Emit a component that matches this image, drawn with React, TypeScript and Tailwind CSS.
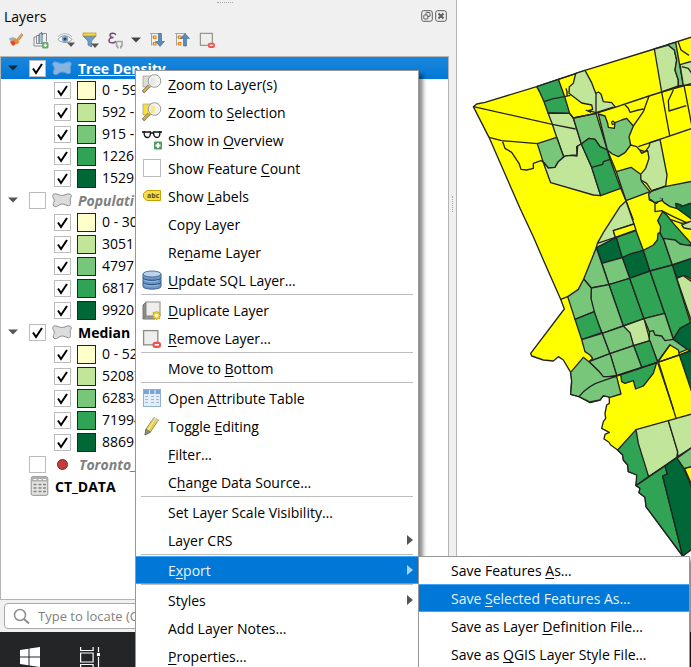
import type { ReactNode } from "react";

const CREAM = "#ffffcc";
const LIME = "#c2e699";
const MID = "#78c679";
const GREEN = "#31a354";
const DARK = "#006837";
const RAMP = [CREAM, LIME, MID, GREEN, DARK];

/* ---------- toolbar icons ---------- */

function BrushIcon() {
  return (
    <svg width="16" height="16" viewBox="0 0 16 16">
      <path d="M1 6.500l5-1.500 3.500 3-3 6-3-1z" fill="#f6c95a" />
      <path d="M1 6.500l4-1.500 2 2-4 2.500z" fill="#8fb4dc" />
      <path d="M2 10l5-2.500 2 3-4 3.500z" fill="#e0463a" />
      <path d="M7.500 6l4 4-2.500 2.500L5 8.500z" fill="#f08a24" />
      <path d="M9 7l4.500-5.500L15 3l-4 5.500z" fill="#d9a55c" stroke="#9a6a28" strokeWidth=".5" />
    </svg>
  );
}

function AddGroupIcon() {
  return (
    <svg width="16" height="18" viewBox="0 0 16 18" fill="none">
      <path d="M4 6H1v9h8" stroke="#8d8d8d" />
      <path d="M6.500 4.500H3.500v8h5" stroke="#8d8d8d" />
      <path d="M9 2.500h4.500v8M7 3.500v8" stroke="#8d8d8d" />
      <path d="M9 13V4a1.500 1.500 0 0 0-3 0v8M8 1l2 3" stroke="#3b6a96" />
      <rect x="9" y="11" width="6.500" height="6.500" rx="1.500" fill="#6ba573" />
      <path d="M12.250 12.500v3.500M10.500 14.250h3.500" stroke="#fff" strokeWidth="1.200" />
    </svg>
  );
}

function EyeIcon() {
  return (
    <svg width="18" height="16" viewBox="0 0 18 16">
      <path d="M1 7.500C4 2.500 11 2.500 15 7.500 11 11.500 5 11.500 1 7.500z" fill="#fff" stroke="#9b9b9b" />
      <path d="M1 5C5 0 12 1 15 5" fill="none" stroke="#b9b9b9" />
      <circle cx="8" cy="7" r="3.300" fill="#7fa3c9" />
      <circle cx="8" cy="7" r="1.500" fill="#2c4566" />
      <path d="M10 10.500h8l-4 4.500z" fill="#555" />
    </svg>
  );
}

function FilterIcon() {
  return (
    <svg width="17" height="17" viewBox="0 0 17 17">
      <path d="M1 4h13L9.500 9v6L6 13V9z" fill="#6f9dcb" stroke="#47759f" strokeWidth=".7" />
      <rect x="1" y="1" width="13" height="3" fill="#f5d63b" stroke="#b79512" strokeWidth=".7" />
      <path d="M9 11.500h8l-4 4.500z" fill="#555" />
    </svg>
  );
}

function EpsilonIcon() {
  return (
    <svg width="16" height="17" viewBox="0 0 16 17" fill="none">
      <path d="M8 3C6.500 .5 2 .8 2 3.300c0 1.700 2 2.200 3.500 2.200C3.500 5.500 1 6 1 8.500c0 3 5 3.200 7 .7" stroke="#72466f" strokeWidth="1.400" />
      <path d="M8.500 9.500h5.500v3c0 1.500-.8 2-1.200 2v2M8.500 9.500v3c0 1.500.8 2 1.200 2v2" stroke="#a5a5a5" strokeWidth="1.700" />
    </svg>
  );
}

function ExpandIcon({ up }: { up?: boolean }) {
  return (
    <svg width="16" height="16" viewBox="0 0 16 16">
      <path d="M1 1.500h11M2.500 1.500v12M2.500 5h3M2.500 12h3" stroke="#a5a5a5" fill="none" />
      <rect x="4.500" y="4" width="2.500" height="2.500" fill="#fbd38a" stroke="#e28a1b" />
      <rect x="4.500" y="10.500" width="2.500" height="2.500" fill="#fbd38a" stroke="#e28a1b" />
      <path
        d={up ? "M11 1.500l4.500 5h-3v7.500h-3V6.500h-3z" : "M9.500 1.500h3v8h3L11 14.500 6.500 9.500h3z"}
        fill="#5b8bbb"
        stroke="#36648f"
        strokeWidth=".6"
      />
    </svg>
  );
}

function RemoveBoxIcon({ size }: { size: number }) {
  return (
    <svg width={size} height={size} viewBox="0 0 18 18">
      <rect x="1.500" y="1.500" width="13.500" height="13.500" fill="#eeeeec" stroke="#888a85" strokeWidth="1.200" />
      <rect x="10" y="12" width="8" height="6" rx="2.500" fill="#ef5350" />
      <path d="M12 15h4" stroke="#fff" strokeWidth="1.500" />
    </svg>
  );
}

/* ---------- tree icons ---------- */

function PolygonIcon({ tone }: { tone: "blue" | "grey" }) {
  const fill = tone === "blue" ? "#86b4e2" : "#dcdcdc";
  const stroke = tone === "blue" ? "#5f9ad4" : "#8c8c8c";
  return (
    <svg width="20" height="15" viewBox="0 0 20 15" className="shrink-0">
      <path
        d="M.7 2.500C1 .8 3.500 .5 5 1.200 8 2.600 11 3 14 1.500 16 .5 19 .6 19.300 2.500 19.500 4.500 18 5 18.200 7c.2 2 .6 3 .2 4.500-.5 1.800-3 1.300-5 .3-3-1.300-5-1-7.500 1C4.500 14.200 1.500 14 1.200 12 1 10 2.500 9 2.300 7 2 5 .4 4.500 .7 2.500z"
        fill={fill}
        stroke={stroke}
      />
    </svg>
  );
}

function Tick() {
  return (
    <svg viewBox="0 0 17 17" className="pointer-events-none absolute inset-0 hidden size-full peer-checked:block">
      <path d="M4 8.500l3 4.500L13 4" fill="none" stroke="#000" strokeWidth="2" />
    </svg>
  );
}

function Check({ label, checked }: { label: string; checked?: boolean }) {
  return (
    <span className="relative size-[17px] shrink-0">
      <input
        type="checkbox"
        aria-label={label}
        defaultChecked={checked}
        className="peer block size-full appearance-none border border-[#bcbcbc] bg-white"
      />
      <Tick />
    </span>
  );
}

function Arrow({ className }: { className: string }) {
  return (
    <svg width="10" height="6" viewBox="0 0 10 6" className={className}>
      <path d="M0 .5h10L5 5.500z" fill="currentColor" />
    </svg>
  );
}

function Classes({ name, labels }: { name: string; labels: string[] }) {
  return (
    <ul>
      {labels.map((text, i) => (
        <li key={text} className="flex h-[22px] items-center pl-[53px]">
          <Check label={`${name} ${text}`} checked />
          <span className="ml-1.5 size-[19px] border border-[#232323]" style={{ background: RAMP[i] }} />
          <span className="ml-1.5">{text}</span>
        </li>
      ))}
    </ul>
  );
}

function LayerRow({ name, checked, selected }: { name: string; checked?: boolean; selected?: boolean }) {
  const look = selected
    ? "bg-gradient-to-b from-[#1a86dc] to-[#0078d7] font-bold text-white underline"
    : checked
      ? "font-bold"
      : "font-bold italic text-[#808080]";
  return (
    <div className={`flex h-[22px] items-center pl-[7px] ${look}`}>
      <Arrow className={selected ? "mr-[11px] text-[#0b2a44]" : "mr-[11px] text-[#555]"} />
      <Check label={name} checked={checked} />
      <span className="mr-1.5 ml-1.5">
        <PolygonIcon tone={selected ? "blue" : "grey"} />
      </span>
      <span className="pt-0.5">{name}</span>
    </div>
  );
}

/* ---------- menu icons ---------- */

function MagnifierIcon({ page }: { page: string }) {
  return (
    <svg width="20" height="20" viewBox="0 0 20 20">
      <path d="M1 2h8v11H1z" fill={page} stroke="#a5a58c" strokeWidth=".8" />
      <path d="M7 12l-6 6" stroke="#666" strokeWidth="3.200" />
      <path d="M7 12l-5.500 5.500" stroke="#e2b13c" strokeWidth="2.200" />
      <circle cx="12.500" cy="7" r="6.300" fill="#f1f1ee" fillOpacity=".9" stroke="#999" />
      <path d="M9 4h4v7H9z" fill={page} fillOpacity=".5" />
    </svg>
  );
}

function GlassesIcon() {
  return (
    <svg width="20" height="20" viewBox="0 0 20 20">
      <path d="M0 2h3M17 2h3M8 3h4" stroke="#111" strokeWidth="1.300" />
      <path d="M2 2h6.500c0 4-1 5.500-3 5.500S2 6 2 2zM11.500 2H18c0 4-1 5.500-3 5.500s-3.500-1.500-3.500-5.500z" fill="#fff" stroke="#111" strokeWidth="1.300" />
      <rect x="12" y="11.500" width="8" height="8" rx="1" fill="#4f9a5c" />
      <path d="M16 13v5M13.500 15.500h5" stroke="#fff" strokeWidth="1.800" />
    </svg>
  );
}

function LabelTagIcon() {
  return (
    <svg width="18" height="12" viewBox="0 0 18 12">
      <path d="M4 .5h13.500v10H4L.5 7.500v-4z" fill="#f7dd4b" stroke="#c4a000" />
      <text x="4" y="8" fontSize="7" fontWeight="700" fill="#5c4d08" fontFamily="Open Sans, sans-serif">
        abc
      </text>
    </svg>
  );
}

function DatabaseIcon() {
  return (
    <svg width="20" height="20" viewBox="0 0 20 20">
      <path d="M1 4v12.500C1 20 19 20 19 16.500V4z" fill="#6a96c8" stroke="#41628a" />
      <path d="M1 8c1 3 17 3 18 0M1 12.300c1 3 17 3 18 0" fill="none" stroke="#2f4f73" />
      <path d="M2 9.700c2 2.500 12 2.500 14 .8M2 14c2 2.500 12 2.500 14 .8" fill="none" stroke="#a6c5e6" strokeWidth=".8" />
      <ellipse cx="10" cy="4" rx="9" ry="3" fill="#bcd3ea" stroke="#4f7299" />
    </svg>
  );
}

function DuplicateIcon() {
  return (
    <svg width="19" height="19" viewBox="0 0 19 19">
      <path d="M1 4l3-3v14l-3 3z" fill="#8c8c88" stroke="#777" />
      <path d="M1 18h12l2-3H4z" fill="#9c9c98" stroke="#777" />
      <rect x="4" y="1" width="14" height="14" fill="#eeeeec" stroke="#888a85" />
      <path d="M14.500 10l1.300 1.500 2-.3-.3 2 1.300 1.300-1.300 1.300.3 2-2-.3L14.500 19l-1.300-1.500-2 .3.3-2-1.300-1.300 1.300-1.300-.3-2 2 .3z" fill="#e8cc3a" stroke="#b89c20" strokeWidth=".7" />
      <circle cx="14.500" cy="14.500" r="1.800" fill="#fff8c8" />
    </svg>
  );
}

function TableIcon() {
  return (
    <svg width="18" height="18" viewBox="0 0 18 18">
      <rect x=".5" y=".5" width="17" height="17" fill="#e3edf7" stroke="#8fb1d3" />
      <rect x="1" y="1" width="16" height="4" fill="#7aa5d2" />
      <path d="M6.500 1v16M12 1v16" stroke="#e9f1f9" />
      <path d="M2 7.500h3M8 7.500h3M13 7.500h3M2 10.500h3M8 10.500h3M13 10.500h3M2 13.500h3M8 13.500h3M13 13.500h3" stroke="#9db9d6" />
    </svg>
  );
}

function GreyTableIcon() {
  return (
    <svg width="19" height="20" viewBox="0 0 18 20">
      <rect x=".7" y=".7" width="16.600" height="18.600" rx="1.500" fill="#e3e3e1" stroke="#8f8f8f" />
      <rect x="1" y="1" width="16" height="4.500" fill="#b0b0b0" />
      <path d="M3 3.500h3M8 3.500h3M12.500 3.500h3" stroke="#fff" />
      <path d="M3 8.500h3M8 8.500h3M12.500 8.500h3M3 12h3M8 12h3M12.500 12h3M3 15.500h3M8 15.500h3M12.500 15.500h3" stroke="#858585" strokeWidth="1.400" />
    </svg>
  );
}

function PencilIcon() {
  return (
    <svg width="16" height="20" viewBox="0 0 16 20">
      <path d="M1 19l1-6L10 1.500l4.500 2.500L6.500 16z" fill="#e3cf4a" stroke="#8a8038" strokeWidth=".8" />
      <path d="M10 1.500l4.500 2.500-1.500 2.500L8.500 4z" fill="#c9c9c5" />
      <path d="M1 19l1-6 4.500 3z" fill="#8f8f8b" stroke="#555" strokeWidth=".6" />
      <path d="M4 14l7.500-11.500" stroke="#f7efa6" strokeWidth="1.200" />
    </svg>
  );
}

/* ---------- menus ---------- */

/** Renders a caption whose mnemonic letter follows an ampersand. */
function Caption({ text }: { text: string }) {
  const at = text.indexOf("&");
  if (at < 0) return <span className="pt-0.5">{text}</span>;
  return (
    <span className="pt-0.5">
      {text.slice(0, at)}
      <span className="underline underline-offset-2">{text[at + 1]}</span>
      {text.slice(at + 2)}
    </span>
  );
}

function MenuItem({ text, icon, active, sub }: { text: string; icon?: ReactNode; active?: boolean; sub?: boolean }) {
  return (
    <button
      type="button"
      role="menuitem"
      className={`flex h-7 w-full items-center text-left whitespace-nowrap ${
        active ? "border-y border-[#42a5f5] bg-[#0078d7] text-[#e8f3fc]" : ""
      }`}
    >
      <span className="flex w-[33px] shrink-0 justify-center">{icon}</span>
      <Caption text={text} />
      {sub && (
        <svg width="6" height="10" viewBox="0 0 6 10" className={`mr-1.5 ml-auto ${active ? "text-[#a9d3f5]" : "text-[#555]"}`}>
          <path d="M0 0l6 5-6 5z" fill="currentColor" />
        </svg>
      )}
    </button>
  );
}

function Separator() {
  return <div role="separator" className="mr-1.5 ml-1.5 h-0.5 border-t border-[#bdbdbd]" />;
}

function MenuFrame({ className, label, children }: { className: string; label: string; children: ReactNode }) {
  return (
    <div
      role="menu"
      aria-label={label}
      className={`absolute bg-white shadow-[4px_4px_4px_rgba(0,0,0,0.45)] outline outline-1 -outline-offset-1 outline-[#979797] ${className}`}
    >
      {children}
    </div>
  );
}

function ContextMenu() {
  return (
    <MenuFrame label="Layer" className="top-[70px] left-[135px] w-[284px]">
      <MenuItem text="&Zoom to Layer(s)" icon={<MagnifierIcon page="#dcdcd8" />} />
      <MenuItem text="Zoom to &Selection" icon={<MagnifierIcon page="#f7df3e" />} />
      <MenuItem text="Show in &Overview" icon={<GlassesIcon />} />
      <label className="flex h-7 items-center">
        <span className="flex w-[33px] shrink-0 justify-center">
          <input type="checkbox" className="size-[18px] appearance-none border border-[#bcbcbc] bg-white" />
        </span>
        <Caption text="Show Feature &Count" />
      </label>
      <MenuItem text="Show &Labels" icon={<LabelTagIcon />} />
      <MenuItem text="Copy Layer" />
      <MenuItem text="Re&name Layer" />
      <MenuItem text="&Update SQL Layer…" icon={<DatabaseIcon />} />
      <Separator />
      <MenuItem text="&Duplicate Layer" icon={<DuplicateIcon />} />
      <MenuItem text="&Remove Layer…" icon={<RemoveBoxIcon size={19} />} />
      <Separator />
      <MenuItem text="Move to &Bottom" />
      <Separator />
      <MenuItem text="Open &Attribute Table" icon={<TableIcon />} />
      <MenuItem text="Toggle &Editing" icon={<PencilIcon />} />
      <MenuItem text="&Filter…" />
      <MenuItem text="C&hange Data Source…" />
      <Separator />
      <MenuItem text="Set Layer Scale Visibility…" />
      <MenuItem text="Layer CRS" sub />
      <Separator />
      <MenuItem text="E&xport" active sub />
      <Separator />
      <MenuItem text="Styles" sub />
      <MenuItem text="Add Layer Notes…" />
      <MenuItem text="&Properties…" />
    </MenuFrame>
  );
}

function ExportMenu() {
  return (
    <MenuFrame label="Export" className="top-[556px] left-[418px] w-[272px]">
      <MenuItem text="Save Features &As…" />
      <MenuItem text="Save &Selected Features As…" active />
      <MenuItem text="Save as Layer &Definition File…" />
      <MenuItem text="Save as &QGIS Layer Style File…" />
    </MenuFrame>
  );
}

/* ---------- map ---------- */

/* Map units are a third of a pixel. Tracts are grouped by map sheet, each with its own origin. */
function TractMap() {
  return (
    <svg
      viewBox="1371 0 702 1896"
      width="234"
      height="632"
      className="block"
      role="img"
      aria-label="Tree density by census tract"
      fill="none"
      stroke="#232323"
      strokeWidth="4"
      strokeLinejoin="round"
    >
      <path
        fill="#ffff00"
        d="M1420 320L1430 312 1455 307 1610 260 1755 211 1963 147 2085 108 2085 1640 2048 1668 1938 1520 1935 1492 1917 1478 1920 1465 1908 1455 1912 1425 1885 1415 1883 1395 1870 1380 1868 1365 1853 1350 1832 1335 1826 1326 1812 1317 1815 1303 1828 1297 1805 1285 1810 1265 1817 1255 1815 1240 1820 1215 1828 1210 1828 1192 1820 1187 1808 1190 1800 1200 1770 1208 1737 1190 1712 1183 1715 1140 1712 1117 1690 1080 1675 1070 1660 1083 1630 1080 1595 1068 1592 1060 1693 927 1682 898 1630 780 1600 710 1560 625 1467 412z"
      />
      <g transform="translate(1395 90)">
        <path fill={GREEN} d="M215 170L280 148 299 200 314 250 249 249 237 215 225 188z" />
        <path fill={LIME} d="M249 249L314 250 325 264 349 342 335 350 336 375 318 376 296 380 275 322 262 283z" />
        <path fill={MID} d="M217 341L275 322 296 380 280 395 270 412 250 414 234 395z" />
        <path fill={LIME} d="M234 395L250 414 270 412 280 395 300 378 318 376 336 378 338 348 349 342 380 412 407 497 385 495 257 458z" />
        <path fill={MID} d="M325 264L393 250 427 360 405 350 390 328 372 325 349 342z" />
        <path fill={GREEN} d="M349 342L372 325 390 328 405 350 427 360 435 388 467 475 407 497 380 412z" />
        <path fill={LIME} d="M332 130L360 121 380 158 392 190 400 186 408 192 415 215 440 218 450 230 393 248 370 242 383 238 380 225 350 219 312 190 313 170 325 160z" />
        <path fill={MID} d="M400 252L420 258 428 280 430 292 448 295 450 278 470 270 485 265 505 288 492 320 497 345 480 368 460 380 442 372 427 360z" />
        <path fill={LIME} d="M568 57L610 45 628 60 635 90 630 120 640 150 640 168 590 186z" />
        <path fill={MID} d="M608 44L632 37 655 166 640 168 640 150 630 120 635 90 628 60z" />
        <path fill={LIME} d="M645 104L680 94 690 165 655 166z" />
        <path fill={MID} d="M454 425L498 412 527 433 530 455 555 485 483 512z" />
        <path fill={LIME} d="M524 360L540 365 552 350 555 338 585 328 606 435 602 468 560 483 545 460 528 450 527 433 542 415 552 385 548 362 530 370z" />
        <path fill={MID} d="M560 483L600 470 690 452 690 515 634 535 615 530 597 518 587 505 575 520 553 510 551 492z" />
        <path fill={DARK} d="M634 534L632 520 648 525 650 530 690 515 690 575z" />
        <path fill={LIME} d="M483 512L438 570 380 670 452 660 505 570z" stroke="none" />
        <path d="M25 230L262 283 332 297M72 322L110 332 217 341M113 335L120 355 140 367 162 400 168 418 185 420 205 415 205 400 228 392 234 395" />
        <path d="M237 215L265 206 299 200M299 200L316 196M306 200Q308 185 303 175M280 148L335 130" />
        <path d="M314 250L325 264 393 250 450 232 552 198 590 186 690 158M393 190L393 250M362 240L378 247M380 412L413 403 415 395 435 388" />
        <path d="M590 186L614 316M520 350L690 292M552 198L535 245 505 288M480 225L490 235 495 247 520 240 535 237M625 180L610 212 612 243 664 227M657 166L680 285M640 37L648 60 672 76M650 110L670 115 680 130" />
        <path d="M427 360L454 425M467 475L483 512 505 570M497 345L515 350 524 360M440 275q8 -4 8 6q-8 6 -8 -6M560 483L580 476" />
      </g>
      <g transform="translate(1560 600)">
        <path fill={LIME} d="M318 3L342 72 280 92 286 112 232 130 250 98 300 20z" />
        <path fill="#ffff00" d="M280 92L342 72 348 90 286 112z" />
        <path fill={DARK} d="M229 143L289 112 307 173 246 190z" />
        <path fill={GREEN} d="M289 112L348 92 370 151 307 173z" />
        <path fill={DARK} d="M307 173L330 162 370 151 390 213 329 235z" />
        <path fill={MID} d="M246 190L307 173 329 235 267 254z" />
        <path fill={MID} d="M229 143L267 254 214 264 191 237z" />
        <path fill={GREEN} d="M370 151L400 135 412 120 414 100 420 98 430 115 457 195 390 213z" />
        <path fill={GREEN} d="M420 98L422 80 413 62 428 35 440 45 460 70 515 132 500 138 480 132 465 120 430 118z" />
        <path fill={MID} d="M430 115L465 120 480 132 515 138 515 177 457 195z" />
        <path fill={DARK} d="M457 195L515 175 515 238 495 227 470 232z" />
        <path fill={LIME} d="M470 235L490 227 515 245 515 365z" />
        <path fill={GREEN} d="M267 254L329 235 372 356 310 378z" />
        <path fill={GREEN} d="M329 235L390 213 434 340 372 356z" />
        <path fill={GREEN} d="M390 213L457 195 512 370 480 385 460 418 434 340z" />
        <path fill={MID} d="M214 264L267 254 310 378 247 400 218 335 213 295z" />
        <path fill={MID} d="M191 237L214 264 213 295 223 335 165 358 143 290 175 268z" />
        <path fill={GREEN} d="M165 358L223 335 245 398 185 419z" />
        <path fill={MID} d="M185 419L247 400 270 461 207 485 218 475 210 465 195 455z" />
        <path fill={MID} d="M247 400L310 378 330 392 341 437 270 461z" />
        <path fill={LIME} d="M310 378L372 356 390 422 341 437 330 398z" />
        <path fill={MID} d="M372 356L434 340 460 418 505 447 478 458 450 435 413 485 388 422 388 395z" />
        <path fill={GREEN} d="M341 437L390 422 413 487 365 502z" />
        <path fill={MID} d="M270 461L341 437 365 502 290 526z" />
        <path fill={MID} d="M207 485L270 461 290 526 250 532 235 512z" />
        <path fill={MID} d="M190 472L207 485 235 512 250 530 290 530 303 582 270 592 250 587 240 600 210 606 177 590 152 583 155 545 152 517z" />
        <path fill={GREEN} d="M302 524L410 488 400 520 370 558 347 567 340 542 315 550 305 545z" />
        <path fill={DARK} d="M460 418L480 385 515 366 515 450 505 450 490 440z" />
        <path fill={DARK} d="M478 465L515 450 515 575z" />
        <path fill="#ffff00" d="M413 487L450 435 475 450 478 465z" />
        <path d="M177 590Q205 555 250 542L413 487 515 452M413 487L461 630M122 298L143 290M232 130L229 143M388 395L400 392 405 405 425 408 435 422 460 418" />
        <path fill={MID} d="M390 -3L405 8 425 2 428 -5" />
        <path d="M405 8L405 35 425 32 460 50 515 75M450 58L485 70 515 65" />
        <path fill={LIME} d="M485 75L515 63 515 88 492 84z" />
      </g>
      <g transform="translate(1680 1080)">
        <path fill={GREEN} d="M173 270L228 209 266 350 228 377 230 345 205 335 203 315 190 300 188 285z" />
        <path fill={LIME} d="M228 209L325 182 353 275 350 293 266 350 235 250z" />
        <path fill={LIME} d="M325 182L395 162 395 263 353 290 353 275z" />
        <path fill={MID} d="M350 295L395 263 395 320 372 326z" />
        <path fill={GREEN} d="M228 377L315 318 322 342 308 348 368 588 258 440 255 412 237 398 240 385z" />
        <path fill={DARK} d="M315 318L350 293 372 326 395 382 400 565 368 588 308 348 322 342z" />
        <path fill="#ffff00" d="M374 326L400 318 400 385z" />
        <path d="M297 10L348 174" />
      </g>
    </svg>
  );
}

/* ---------- page ---------- */

function ToolButton({ label, className, children }: { label: string; className?: string; children: ReactNode }) {
  return (
    <button type="button" aria-label={label} className={`flex h-6 shrink-0 items-center justify-center ${className ?? "w-[25px]"}`}>
      {children}
    </button>
  );
}

function LayersPanel() {
  return (
    <section className="flex w-[449px] shrink-0 flex-col">
      <div className="flex h-1 items-center justify-center text-[#a8a8a8]">
        <span className="w-4 border-t border-dotted" />
      </div>
      <header className="flex h-6 items-center pr-0.5 pl-1 text-sm">
        <h1 className="pt-0.5">Layers</h1>
        <button type="button" aria-label="Float panel" className="ml-auto">
          <svg width="12" height="12" viewBox="0 0 12 12" fill="none" stroke="#5d5d5d">
            <rect x=".7" y=".7" width="10.600" height="10.600" rx="2" />
            <rect x="5" y="2.500" width="4" height="4" rx=".5" />
            <rect x="2.800" y="5" width="4" height="4" rx=".5" fill="#f0f0f0" />
          </svg>
        </button>
        <button type="button" aria-label="Close panel" className="ml-0.5">
          <svg width="12" height="12" viewBox="0 0 12 12" fill="none" stroke="#5d5d5d">
            <rect x=".7" y=".7" width="10.600" height="10.600" rx="2" />
            <path d="M3.500 3.500l5 5M8.500 3.500l-5 5" strokeWidth="2" />
          </svg>
        </button>
      </header>
      <div className="flex h-7 items-start pl-[3px]" role="toolbar" aria-label="Layer tools">
        <ToolButton label="Layer styling"><BrushIcon /></ToolButton>
        <ToolButton label="Add group"><AddGroupIcon /></ToolButton>
        <ToolButton label="Map themes"><EyeIcon /></ToolButton>
        <ToolButton label="Filter legend"><FilterIcon /></ToolButton>
        <ToolButton label="Filter by expression"><EpsilonIcon /></ToolButton>
        <ToolButton label="Expression options" className="ml-0.5 w-3"><Arrow className="text-[#444]" /></ToolButton>
        <ToolButton label="Expand all" className="ml-0.5 w-[25px]"><ExpandIcon /></ToolButton>
        <ToolButton label="Collapse all"><ExpandIcon up /></ToolButton>
        <ToolButton label="Remove layer"><RemoveBoxIcon size={16} /></ToolButton>
      </div>
      <div className="flex-1 border border-[#b4b4b4] bg-white text-sm">
        <LayerRow name="Tree Density" checked selected />
        <Classes name="Tree Density" labels={["0 - 59", "592 -", "915 -", "1226", "1529"]} />
        <LayerRow name="Populati" />
        <Classes name="Population" labels={["0 - 30", "3051", "4797", "6817", "9920"]} />
        <LayerRow name="Median" checked />
        <Classes name="Median" labels={["0 - 52", "52087", "62834", "71994", "8869"]} />
        <div className="flex h-[22px] items-center pl-7 font-bold text-[#808080] italic">
          <Check label="Toronto" />
          <span className="mr-[11px] ml-[11px] size-[11px] rounded-full border border-[#7d2626] bg-[#c43c39]" />
          <span className="pt-0.5">Toronto_</span>
        </div>
        <div className="flex h-[22px] items-center gap-1.5 pl-[29px] font-bold">
          <GreyTableIcon />
          <span className="pt-0.5">CT_DATA</span>
        </div>
      </div>
      <div className="flex h-8 items-center pl-1">
        <label className="flex h-[26px] w-60 items-center gap-2 rounded-sm border border-[#a9a9a9] bg-white pl-2">
          <svg width="17" height="17" viewBox="0 0 17 17" fill="none" stroke="#8f8f8f" strokeWidth="1.500">
            <circle cx="7" cy="7" r="5.500" />
            <path d="M11 11l5 4.500" strokeWidth="2" />
          </svg>
          <input
            type="text"
            aria-label="Locate"
            placeholder="Type to locate (Ctrl+K)"
            className="w-48 text-[13px] outline-none placeholder:text-[#7f7f7f]"
          />
        </label>
      </div>
    </section>
  );
}

export default function App() {
  return (
    <div className="relative flex h-screen flex-col overflow-hidden bg-[#f0f0f0] font-['Open_Sans','Noto_Sans',sans-serif] text-sm text-black">
      <main className="flex min-h-0 flex-1">
        <LayersPanel />
        <div className="flex w-2 shrink-0 items-center justify-center border-r border-[#b4b4b4] pb-56">
          <span className="h-4 border-l border-dotted border-[#a8a8a8]" />
        </div>
        <div className="min-w-0 flex-1 overflow-hidden bg-white">
          <TractMap />
        </div>
      </main>
      <footer className="flex h-[35px] shrink-0 items-start gap-10 overflow-hidden bg-[#232527] pt-[15px] pl-5">
        <button type="button" aria-label="Start">
          <svg width="20" height="20" viewBox="0 0 20 20" fill="#fff">
            <path d="M0 3l8.500-1.200V9.500H0zM9.500 1.600L20 0v9.500H9.500zM0 10.500h8.500v7.700L0 17zM9.500 10.500H20V20L9.500 18.400z" />
          </svg>
        </button>
        <button type="button" aria-label="Task view">
          <svg width="20" height="22" viewBox="0 0 20 22" fill="none" stroke="#fff" strokeWidth="1.200">
            <path d="M.6 0v3.500h12.500V0M.6 22v-4.500h12.500V22M.6 6h12.500v9H.6zM18.500 0v5M18.500 10v12" />
            <rect x="17.500" y="6.500" width="2" height="2" fill="#fff" />
          </svg>
        </button>
      </footer>
      <ContextMenu />
      <ExportMenu />
    </div>
  );
}
